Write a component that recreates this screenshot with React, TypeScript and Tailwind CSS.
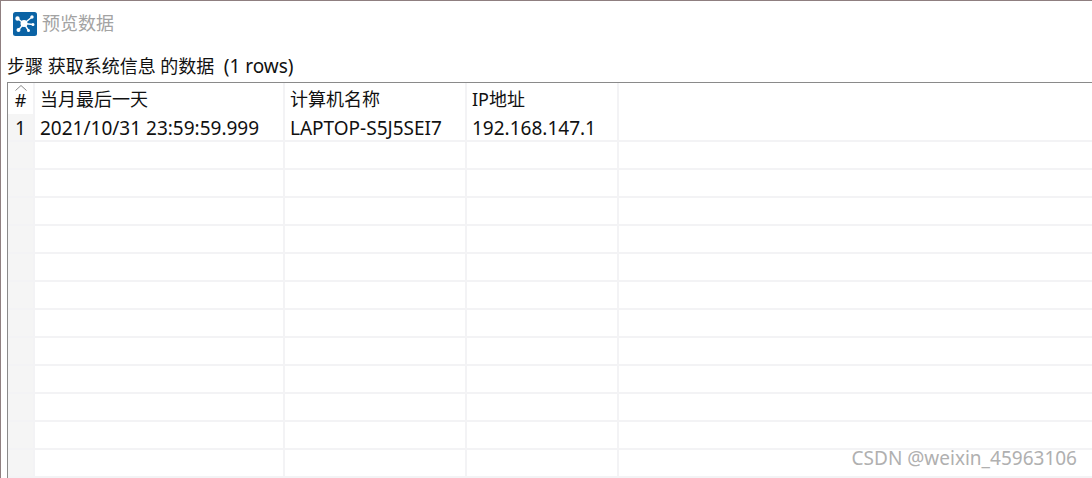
import React from "react";

const columns = [
  { title: "当月最后一天", value: "2021/10/31 23:59:59.999", width: "w-[250px]" },
  { title: "计算机名称", value: "LAPTOP-S5J5SEI7", width: "w-[182px]" },
  { title: "IP地址", value: "192.168.147.1", width: "w-[152px]" },
];

const emptyRows = Array.from({ length: 12 }, (_, i) => i);

const PreviewIcon = () => (
  <svg viewBox="0 0 24 24" className="h-6 w-6 shrink-0">
    <rect width="24" height="24" rx="2.5" fill="#0b63a5" />
    <g stroke="#fff" strokeWidth="1.4" fill="#fff">
      <path d="M11 11.5 L4.5 6.5 M11 11.5 L19 5 M11 11.5 L20 12.5 M11 11.5 L5.5 18 M11 11.5 L15.5 18.5" />
      <circle cx="11" cy="11.5" r="2.8" />
      <circle cx="4.5" cy="6.5" r="1.5" />
      <circle cx="19" cy="5" r="1" />
      <circle cx="20" cy="12.5" r="0.8" />
      <circle cx="5.5" cy="18" r="1.3" />
      <circle cx="15.5" cy="18.5" r="0.8" />
    </g>
  </svg>
);

export default function App() {
  return (
    <div className="relative h-[478px] w-[1092px] overflow-hidden border-l border-t border-[#8f7f80] bg-white font-['Noto_Sans','Noto_Sans_CJK_SC',sans-serif] text-[18px] text-[#111]">
      <div className="flex h-[43px] items-center gap-[5px] pl-3 pt-[2px]">
        <PreviewIcon />
        <span className="text-[#a3a3a3]">预览数据</span>
      </div>
      <div className="flex h-[38px] items-center pl-[6px] pt-[6px] leading-none">
        步骤 获取系统信息 的数据&nbsp;&nbsp;<span className="text-[19px]">(1 rows)</span>
      </div>

      <div className="ml-[6px] border-l border-t border-[#8a8a8a]">
        <div className="flex h-[31px]">
          <div className="relative flex w-[27px] items-center justify-center border-r-2 border-[#f3f3f5] pt-1">
            #
            <svg viewBox="0 0 12 6" className="absolute left-[7px] top-[2px] h-[6px] w-[12px]">
              <path d="M0.5 5.5 L6 0.5 L11.5 5.5" fill="none" stroke="#8a8a8a" />
            </svg>
          </div>
          {columns.map((col) => (
            <div key={col.title} className={`${col.width} flex items-center border-r-2 border-[#f3f3f5] pl-[5px] pt-[2px]`}>
              {col.title}
            </div>
          ))}
        </div>

        <div className="flex h-[28px] border-b-2 border-[#f3f3f5] text-[19px]">
          <div className="flex w-[27px] items-center justify-center border-r-2 border-[#f3f3f5] bg-[#f5f5f5] pt-[2px]">1</div>
          {columns.map((col) => (
            <div key={col.title} className={`${col.width} flex items-center border-r-2 border-[#f3f3f5] pl-[5px] pt-[2px]`}>
              {col.value}
            </div>
          ))}
        </div>

        {emptyRows.map((row) => (
          <div key={row} className="flex h-[28px] border-b-2 border-[#f3f3f5]">
            <div className="w-[27px] border-r-2 border-[#f3f3f5] bg-[#f5f5f5]" />
            {columns.map((col) => (
              <div key={col.title} className={`${col.width} border-r-2 border-[#f3f3f5]`} />
            ))}
          </div>
        ))}
      </div>

      <div className="absolute right-[15px] bottom-[10px] text-[19px] leading-none text-[#b0b0b0]">
        CSDN @weixin_45963106
      </div>
    </div>
  );
}
